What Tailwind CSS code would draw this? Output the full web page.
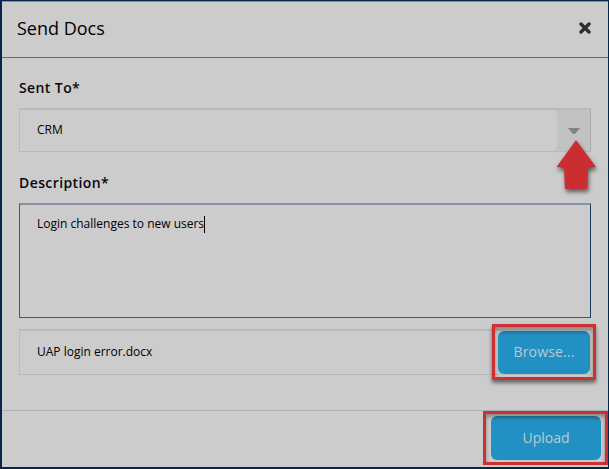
<!DOCTYPE html>
<html lang="en">
<head>
<meta charset="utf-8">
<title>Send Docs</title>
<script src="https://cdn.jsdelivr.net/npm/@tailwindcss/browser@4"></script>
</head>
<body class="w-[609px] h-[469px] overflow-hidden bg-[#052549] font-['Open_Sans',sans-serif] text-black">
<main class="relative w-[609px] h-[469px] flex flex-col border-t border-l-2 border-r border-b-2 border-[#052549] bg-[#cccccc]">
  <header class="h-[57px] shrink-0 flex items-center justify-between pl-[15px] pr-[17px] border-t border-b border-t-[#8290a5] border-b-[#576e84]">
    <h1 class="text-[18px] leading-6 whitespace-nowrap -mt-1">Send Docs</h1>
    <button aria-label="Close" class="block -mt-[3px]">
      <svg width="12" height="12" viewBox="0 0 12 12" class="block"><path d="M2 2L10 10M10 2L2 10" stroke="#2c2f31" stroke-width="3.4" stroke-linecap="round"/></svg>
    </button>
  </header>
  <section class="h-[352px] shrink-0 flex flex-col pl-[17px] pr-[17px] pt-5">
    <label class="h-5 leading-5 text-[14px] font-semibold tracking-[0.4px] text-[#080a0c]">Sent To*</label>
    <div class="mt-[10px] h-11 shrink-0 flex border-2 border-l border-b border-r border-[#bababa] border-r-[#a9a9a9] bg-[#c2c2c2]">
      <div class="flex-1 flex items-center rounded-r-[5px] bg-[#cccccc] pl-[17px] text-[12px] pb-px">CRM</div>
      <div class="w-[33px] flex items-center justify-center"><svg width="12" height="6" viewBox="0 0 12 6" class="block"><path d="M0 0H12L7 6H5Z" fill="#828282"/></svg></div>
    </div>
    <label class="mt-[21px] h-5 leading-5 text-[14px] font-semibold tracking-[0.4px] text-[#080a0c]">Description*</label>
    <div class="mt-[10px] h-[115px] shrink-0 border border-t-2 border-[#3e5878] border-t-[#8894a2] border-r-[#183b62] pl-[17px] pt-[11px] text-[12px] leading-4 flex items-start">
      <span>Login challenges to new users</span><span class="w-px h-[17px] bg-black"></span>
    </div>
    <div class="mt-[11px] h-[46px] shrink-0 flex items-center border border-t-2 border-[#bababa] pl-[17px] text-[12px]">
      <span class="flex-1 -mt-[2px]">UAP login error.docx</span>
      <div class="relative w-[92px] h-[43px]">
        <button class="w-full h-full rounded-[6px] bg-[#2191c4] bg-linear-to-b from-[#247da7] from-0% to-[#2191c4] to-[12%] text-[14px] tracking-[0.15px] pb-[2px] text-[#bdc9d0]">Browse...</button>
        <div class="absolute -left-[6px] -top-[7px] w-[104px] h-[56px] border-3 border-[#cd3032] shadow-[0_3px_4px_rgba(0,0,0,.5),inset_0_3px_4px_rgba(0,0,0,.35)]"></div>
      </div>
    </div>
  </section>
  <footer class="flex-1 flex justify-end border-t border-[#a9b2b9] pr-[7px] pt-[5px]">
    <div class="relative w-[110px] h-[44px]">
      <button class="w-full h-full rounded-[6px] bg-[#2191c4] bg-linear-to-b from-[#247da7] from-0% to-[#2191c4] to-[10%] text-[14px] pb-[2px] text-[#bdc9d0]">Upload</button>
      <div class="absolute -left-[8px] -top-[5px] w-[125px] h-[54px] border-3 border-[#cd3032] shadow-[inset_0_3px_4px_rgba(0,0,0,.35)]"></div>
    </div>
  </footer>
  <svg class="absolute left-[548px] top-[135px] overflow-visible drop-shadow-[1px_3px_2px_rgba(0,0,0,.55)]" width="50" height="60" viewBox="550 136 50 60"><path d="M576 140L596 167L588 168L587.5 189H565L564 168L556.500 167Z" fill="#cb2e30"/></svg>
</main>
</body>
</html>
